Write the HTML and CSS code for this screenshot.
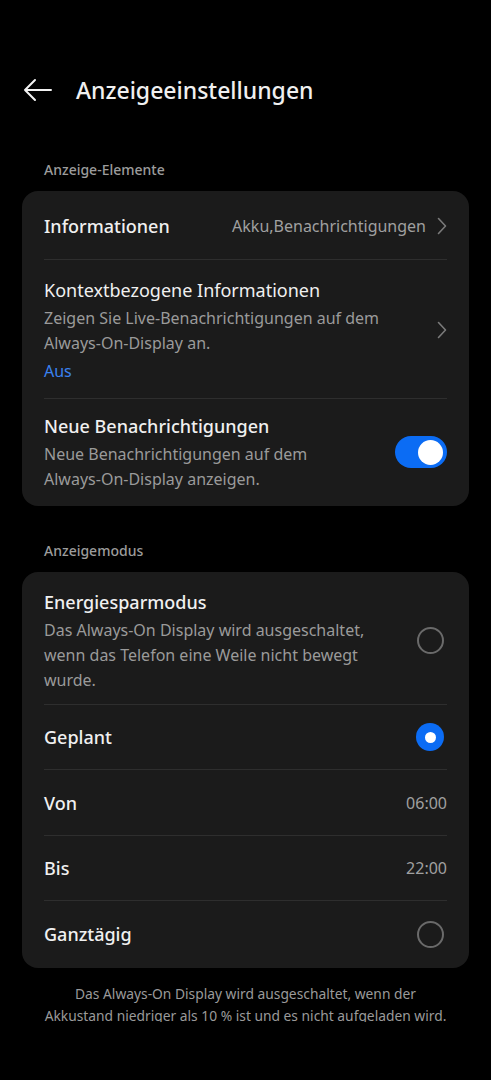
FILE: index.html
```html
<!DOCTYPE html>
<html lang="de">
<head>
<meta charset="utf-8">
<link rel="stylesheet" href="styles.css">
</head>
<body>
<div class="screen">
  <header class="topbar">
    <svg class="back" width="30" height="24" viewBox="0 0 30 24"><path d="M28 12H2M12 2L2 12l10 10" fill="none" stroke="#f2f2f2" stroke-width="2" stroke-linecap="round" stroke-linejoin="round"/></svg>
    <h1 class="title">Anzeigeeinstellungen</h1>
  </header>

  <div class="section-label">Anzeige-Elemente</div>
  <section class="card">
    <div class="row row-info">
      <div class="row-title strong">Informationen</div>
      <div class="row-end">
        <span class="value">Akku,Benachrichtigungen</span>
        <svg class="chev" width="10" height="18" viewBox="0 0 10 18"><path d="M1.5 1.5L8.5 9l-7 7.5" fill="none" stroke="#7a7a7a" stroke-width="1.6" stroke-linecap="round" stroke-linejoin="round"/></svg>
      </div>
    </div>
    <div class="row row-context">
      <div class="row-text">
        <div class="row-title">Kontextbezogene Informationen</div>
        <div class="desc">Zeigen Sie Live-Benachrichtigungen auf dem Always-On-Display an.</div>
        <div class="status">Aus</div>
      </div>
      <svg class="chev" width="10" height="18" viewBox="0 0 10 18"><path d="M1.5 1.5L8.5 9l-7 7.5" fill="none" stroke="#7a7a7a" stroke-width="1.6" stroke-linecap="round" stroke-linejoin="round"/></svg>
    </div>
    <div class="row row-new">
      <div class="row-text">
        <div class="row-title strong">Neue Benachrichtigungen</div>
        <div class="desc">Neue Benachrichtigungen auf dem Always-On-Display anzeigen.</div>
      </div>
      <div class="toggle"><span class="knob"></span></div>
    </div>
  </section>

  <div class="section-label second">Anzeigemodus</div>
  <section class="card">
    <div class="row row-energy">
      <div class="row-text">
        <div class="row-title strong">Energiesparmodus</div>
        <div class="desc narrow">Das Always-On Display wird ausgeschaltet, wenn das Telefon eine Weile nicht bewegt wurde.</div>
      </div>
      <span class="radio"></span>
    </div>
    <div class="row simple">
      <div class="row-title strong">Geplant</div>
      <span class="radio on"></span>
    </div>
    <div class="row simple tall">
      <div class="row-title strong">Von</div>
      <span class="value">06:00</span>
    </div>
    <div class="row simple">
      <div class="row-title strong">Bis</div>
      <span class="value">22:00</span>
    </div>
    <div class="row simple last">
      <div class="row-title strong">Ganztägig</div>
      <span class="radio"></span>
    </div>
  </section>

  <p class="footnote">Das Always-On Display wird ausgeschaltet, wenn der Akkustand niedriger als 10 % ist und es nicht aufgeladen wird.</p>
</div>
</body>
</html>
```

FILE: styles.css
```css
* { box-sizing: border-box; }
html, body { margin: 0; padding: 0; background: #000; }
body { font-family: "Noto Sans", Roboto, sans-serif; color: #efefef; }

.screen {
  width: 491px;
  height: 1022px;
  overflow: hidden;
  padding: 62px 22px 0;
}

.topbar {
  display: flex;
  align-items: center;
  height: 56px;
  gap: 23px;
  padding-left: 1px;
}
.back { display: block; flex: none; }
.title {
  margin: 0;
  font-size: 23px;
  font-weight: 500;
  line-height: 32px;
  color: #f0f0f0;
}

.section-label {
  margin: 42px 0 11px 22px;
  font-size: 14px;
  line-height: 20px;
  color: #9c9c9c;
  font-weight: 500;
}
.section-label.second { margin-top: 35px; }

.card {
  background: #1b1b1b;
  border-radius: 16px;
  padding: 0 22px;
}

.row {
  display: flex;
  align-items: center;
  justify-content: space-between;
  gap: 12px;
  border-top: 1px solid #2e2e2e;
}
.row:first-child { border-top: none; }

.row-title {
  font-size: 18px;
  line-height: 28px;
  color: #f0f0f0;
  font-weight: 400;
}
.row-title.strong { font-weight: 500; }

.row-text { flex: 1; min-width: 0; }

.desc {
  font-size: 16px;
  line-height: 25px;
  color: #9a9a9a;
  margin-top: 2px;
}
.desc.narrow { max-width: 350px; }

.status {
  font-size: 16px;
  line-height: 26px;
  margin-top: 2px;
  color: #3a82f0;
}

.row-end { display: flex; align-items: center; gap: 11px; }
.value { font-size: 16px; line-height: 24px; color: #a0a0a0; }
.chev { display: block; flex: none; }

.row-info { padding: 21px 0 19px; }
.row-context { padding: 16px 0 14px; }
.row-context .row-text { max-width: 370px; }
.row-new { padding: 13px 0 14px; }
.row-new .row-text { max-width: 320px; }

.toggle {
  flex: none;
  width: 52px;
  height: 32px;
  border-radius: 16px;
  background: #0b6cf4;
  display: flex;
  align-items: center;
  justify-content: flex-end;
  padding-right: 4px;
}
.knob {
  width: 25px;
  height: 25px;
  border-radius: 50%;
  background: #fff;
}

.row-energy { padding: 16px 0 11px; }
.row.simple { padding: 18px 0; }
.row.simple.tall { padding: 19px 0 18px; }
.row.simple.last { padding: 19px 0 20px; }

.radio {
  flex: none;
  width: 27px;
  height: 27px;
  border-radius: 50%;
  border: 2px solid #6a6a6a;
  margin-right: 3px;
  display: flex;
  align-items: center;
  justify-content: center;
}
.radio.on {
  border: none;
  background: #0b6cf4;
  width: 28px;
  height: 28px;
}
.radio.on::after {
  content: "";
  width: 11px;
  height: 11px;
  border-radius: 50%;
  background: #fff;
}

.footnote {
  margin: 15px 20px 0;
  text-align: center;
  font-size: 13.8px;
  line-height: 22px;
  color: #9a9a9a;
}
```
